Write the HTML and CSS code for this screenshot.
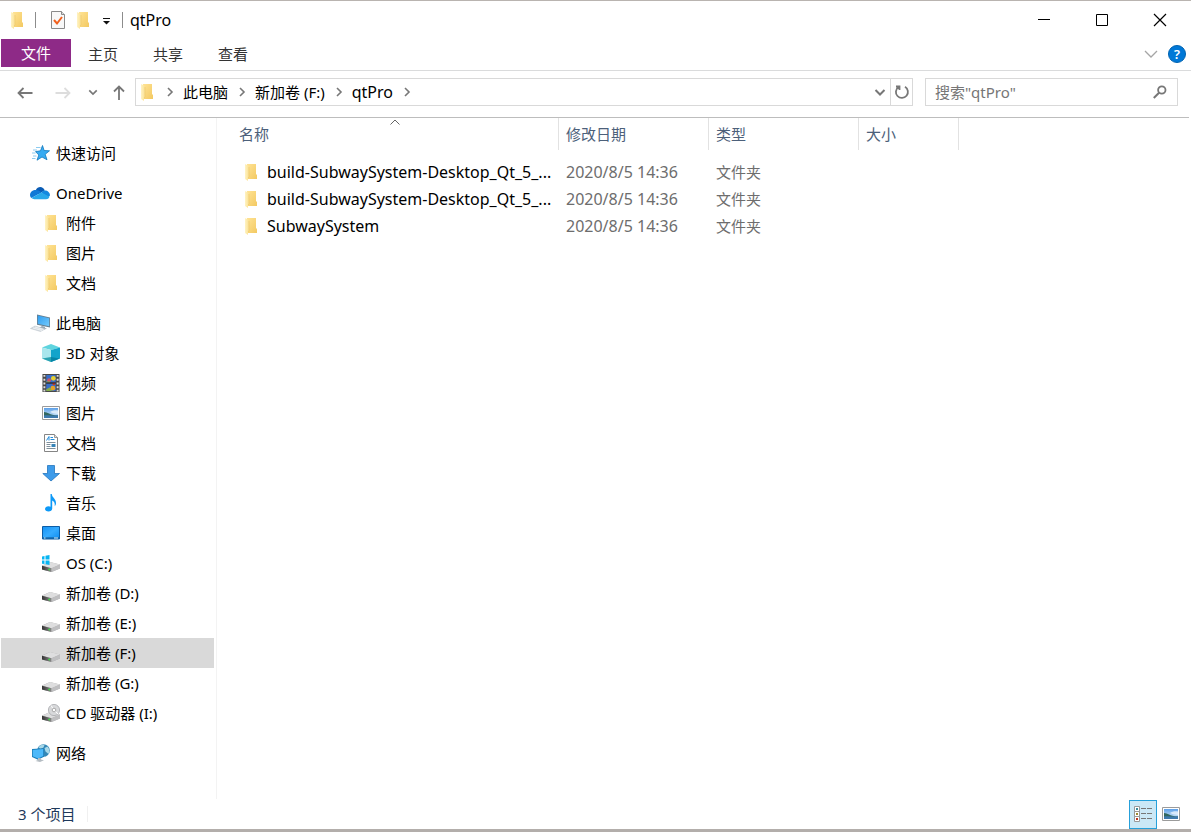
FILE: index.html
```html
<!DOCTYPE html>
<html lang="zh-CN">
<head>
<meta charset="utf-8">
<meta name="viewport" content="width=device-width, initial-scale=1">
<title>qtPro</title>
<link rel="stylesheet" href="styles.css">
</head>
<body>
<svg class="sprite" aria-hidden="true">
  <defs>
    <linearGradient id="g-folder" x1="0" y1="0" x2="1" y2="1"><stop offset="0" stop-color="#ffe394"/><stop offset="1" stop-color="#f3c962"/></linearGradient>
    <linearGradient id="g-flap" x1="0" y1="0" x2="1" y2="0"><stop offset="0" stop-color="#fff3c4"/><stop offset="1" stop-color="#fbe08f"/></linearGradient>
    <linearGradient id="g-blue" x1="0" y1="0" x2="1" y2="1"><stop offset="0" stop-color="#2f9df0"/><stop offset="1" stop-color="#74cafb"/></linearGradient>
    <linearGradient id="g-desk" x1="0" y1="0" x2="1" y2="1"><stop offset="0" stop-color="#1492f5"/><stop offset="0.5" stop-color="#35abff"/><stop offset="1" stop-color="#0d8cf0"/></linearGradient>
    <linearGradient id="g-front" x1="0" y1="0" x2="1" y2="0"><stop offset="0" stop-color="#333"/><stop offset="1" stop-color="#8a8a8a"/></linearGradient>
    <linearGradient id="g-sky" x1="0" y1="0" x2="0" y2="1"><stop offset="0" stop-color="#5b9fe8"/><stop offset="1" stop-color="#e3f2fb"/></linearGradient>
  </defs>
  <symbol id="i-folder" viewBox="0 0 18 18">
    <path d="M5 1h9v10l1 1v4H5z" fill="url(#g-folder)"/>
    <path d="M3 1l4 2v11l-1 1v3l-3-2z" fill="url(#g-flap)"/>
    <path d="M6 15l1-1V4" fill="none" stroke="#e9c66b" stroke-width=".6"/>
  </symbol>
  <symbol id="i-star" viewBox="0 0 18 18">
    <path d="M10.500 1.500l1.600 5L17.500 6.800l-4.300 3.500L15 15.800 10 13 5 16.200 6.800 11 3.500 7.600l5-.8z" fill="#37abf2" stroke="#1278bd" stroke-width=".8"/>
    <path d="M4 3.500H8.500M1 6h4M0 9h3.500M1 12h3.500M0 14.500h3.500" stroke="#8ccbf0" stroke-width="1"/>
  </symbol>
  <symbol id="i-cloud" viewBox="0 0 21 14">
    <path d="M6 4C8-.5 14-.5 15.500 4.500L9 8z" fill="#0a5cb5"/>
    <path d="M6 3.800c-3 0-6 2-6 5.200 0 1.500.6 2.500 1.500 3.300L12 6.500C10 4.500 8 3.800 6 3.800z" fill="#1079d6"/>
    <path d="M15.500 4.300c-1.500 0-2.500.6-3.500 2.200l6.500 5.500L21 9.500c0-3-2.300-5.200-5.500-5.200z" fill="#1489df"/>
    <path d="M1.500 12.300L12 6.500l8.500 4.400c-.6 1.800-2 2.600-3.700 2.600H4.500c-1.200 0-2.200-.5-3-1.200z" fill="#28a8ea"/>
  </symbol>
  <symbol id="i-pc" viewBox="0 0 20 18">
    <path d="M7 .5l13 3v10l-13-2.800z" fill="#657f91"/><path d="M7.800 1.500l11.400 2.700v8L7.800 9.700z" fill="url(#g-blue)"/>
    <path d="M12 12l3 .8v1.200l2 .8-3 .7-5-1.500z" fill="#9aa8b3"/><path d="M5 12l10 3-4.500 2.500L.5 14.500z" fill="#d5dce1" stroke="#b5bfc7" stroke-width=".5"/>
    <path d="M3 14l9 2.400M5 13l8.500 2.400" stroke="#fff" stroke-width=".6"/>
  </symbol>
  <symbol id="i-cube" viewBox="0 0 18 18">
    <path d="M9 0l9 3.500L9 6 0 3.500z" fill="#5fd4de"/><path d="M0 3.500L9 6v12l-9-3.500z" fill="#a9e6ed"/><path d="M18 3.500L9 6v12l9-3.500z" fill="#13a4cb"/><path d="M9 13v5l-9-3.500z" fill="#2aa3b2"/><path d="M9 13l9 1.500L9 18z" fill="#0786a8"/>
  </symbol>
  <symbol id="i-film" viewBox="0 0 18 19">
    <path d="M0 0h18v19H0z" fill="#484848"/><path d="M4 1h10v8H4zM4 10h10v8H4z" fill="#386ec9"/>
    <path d="M1 1h2v2H1zM1 5h2v2H1zM1 9h2v2H1zM1 13h2v2H1zM1 16.500h2v2H1zM15 1h2v2h-2zM15 5h2v2h-2zM15 9h2v2h-2zM15 13h2v2h-2zM15 16.500h2v2h-2z" fill="#ddd"/>
    <circle cx="11.500" cy="4.500" r="2.500" fill="#e7cf31"/><circle cx="12" cy="10.500" r="1.500" fill="#c63a2c"/><circle cx="7" cy="6.500" r="2" fill="#cf5363"/><circle cx="11" cy="15" r="2.500" fill="#e5a127"/><path d="M4 8h4v1H4zM4 16l4-2 2 4H4z" fill="#87ae49"/><path d="M4 9.500h10" stroke="#222"/>
  </symbol>
  <symbol id="i-photo" viewBox="0 0 18 14">
    <path d="M.5.500h17v13H.5z" fill="#fff" stroke="#9b9b9b"/><path d="M2 2h14v10H2z" fill="url(#g-sky)"/><path d="M2 6c4 0 5 3 14 3.500v1H2z" fill="#326860"/><path d="M2 9.500c5-1 9 1 14-.5v3H2z" fill="#3d79ad"/><path d="M8 6c2-1.500 5-2 8-1.500V8l-5-.8z" fill="#fff" opacity=".65"/>
  </symbol>
  <symbol id="i-doc" viewBox="0 0 18 18">
    <path d="M2.500.500h10l3 3v14h-13z" fill="#fff" stroke="#858585"/><path d="M12.500.500v3h3" fill="#ddd" stroke="#858585" stroke-width=".8"/>
    <path d="M4.500 6.500L7 2.500v4M8.500 3.500h2.500M8.500 5.500h4" fill="none" stroke="#218ddd"/><path d="M4.500 8.500h9M4.500 10.500h4M4.500 12.500h4M4.500 14.500h9" stroke="#7f8f9b"/><path d="M9.500 10h4v3h-4z" fill="#3583b7"/>
  </symbol>
  <symbol id="i-down" viewBox="0 0 18 18"><path d="M5.500 1.500h7v8h5L9 17 .8 9.500h4.700z" fill="#3d9bea" stroke="#2375bc" stroke-width=".8"/></symbol>
  <symbol id="i-note" viewBox="0 0 18 18"><path d="M8.500 0h1.300c.3 4 4.500 4.500 4.200 9.500-.1 1-.5 2-1.300 2.700.4-3.400-.7-4.700-2.500-5.700v8c0 1.800-1.700 3-3.700 3S3 16.500 3 15s1.500-2.700 3.500-2.700c.8 0 1.500.2 2 .4z" fill="#0d99f7"/></symbol>
  <symbol id="i-desk" viewBox="0 0 18 14"><path d="M.5.500h17v12.500H.5z" fill="url(#g-desk)" stroke="#0c5da6"/><path d="M1 12h16" stroke="#0b4d86"/><path d="M2 12h1.500M12 12h4" stroke="#d4f2ff"/></symbol>
  <symbol id="i-drive" viewBox="0 0 18 18"><path d="M0 11.500L8 8l10 2.500v4L9.500 18 0 15.500z" fill="#aaa"/><path d="M0 11.800L8 8l10 2.500-8.500 3.700z" fill="#dededf"/><path d="M0 11.800l9.500 2.400V18L0 15.500z" fill="url(#g-front)"/><path d="M9.500 14.200L18 10.500v4L9.500 18z" fill="#bfbfc1"/><path d="M6.500 15.300l1.500.4" stroke="#38e445" stroke-width="1.500"/></symbol>
  <symbol id="i-os" viewBox="0 0 18 18"><use href="#i-drive" width="18" height="18"/><path d="M-1 2.600l3.500-.6v3.500H-1zM3.500 1.800L7.500 1v4.500h-4zM-1 6.500h3.500V10L-1 9.500zM3.500 6.500h4V11l-4-.8z" fill="#08b5f2"/></symbol>
  <symbol id="i-cd" viewBox="0 0 18 18"><use href="#i-drive" width="18" height="18"/><circle cx="12" cy="6" r="5.600" fill="#d8d9db" stroke="#a8aaad" stroke-width=".8"/><path d="M12 6L9 1.500M12 6l4 4" stroke="#fff"/><circle cx="12" cy="6" r="1.800" fill="#fff" stroke="#999" stroke-width=".8"/></symbol>
  <symbol id="i-net" viewBox="0 0 18 18">
    <circle cx="11.500" cy="6.500" r="6.300" fill="#3487b6"/>
    <path d="M6.500 3.500c1.500-2.500 4-3 6-2.500l-1 2.500L8.500 5zM12.500 4l3-1.500c2 2 2.500 5 1 7.500l-3-2.500z" fill="#a8d8e8"/>
    <path d="M0 5l12-.8v8.600l-6 3L0 13z" fill="#1d7fba"/><path d="M.8 5.900l10.400-.8v7l-5 2.400-5.400-2.200z" fill="#4db9fa"/>
    <path d="M6 14l3 .2v1.300l3 .8L8 18l-4.500-1 2.500-1z" fill="#b4bcc2"/>
  </symbol>
  <symbol id="i-chev" viewBox="0 0 10 10"><path d="M3 1l4 4-4 4" fill="none" stroke="#777" stroke-width="1.600"/></symbol>
  <symbol id="i-chevdown" viewBox="0 0 12 12"><path d="M1.500 4L6 8.500 10.500 4" fill="none" stroke="currentColor" stroke-width="2"/></symbol>
</svg>

<div class="window">
  <header class="titlebar">
    <svg class="icon"><use href="#i-folder"/></svg>
    <span class="bar bar-a"></span>
    <button class="quick" aria-label="属性"><svg class="icon" viewBox="0 0 18 18"><path d="M2.500.500h10l3 3v14h-13z" fill="#f8f8f8" stroke="#8a8a8a"/><path d="M12.500.500v3h3" fill="#ddd" stroke="#8a8a8a"/><path d="M5 9l3 3.500L13 6" fill="none" stroke="#f1601d" stroke-width="2"/></svg></button>
    <button class="quick" aria-label="新建文件夹"><svg class="icon"><use href="#i-folder"/></svg></button>
    <button class="quick quick-more" aria-label="自定义快速访问工具栏"><svg width="8" height="8" viewBox="0 0 8 8"><path d="M0 .500h7" stroke="#111"/><path d="M0 3h7L3.500 6.500z" fill="#111"/></svg></button>
    <span class="bar bar-b"></span>
    <h1 class="title">qtPro</h1>
    <div class="controls">
      <button aria-label="最小化"><svg width="12" height="12" viewBox="0 0 12 12"><path d="M0 5.500h12" stroke="#000"/></svg></button>
      <button aria-label="最大化"><svg width="12" height="12" viewBox="0 0 12 12"><path d="M.5.500h11v11H.5z" fill="none" stroke="#000"/></svg></button>
      <button aria-label="关闭"><svg width="12" height="12" viewBox="0 0 12 12"><path d="M0 0l12 12M12 0L0 12" stroke="#000" stroke-width="1.200"/></svg></button>
    </div>
  </header>

  <nav class="tabs">
    <button class="tab file">文件</button>
    <button class="tab">主页</button>
    <button class="tab">共享</button>
    <button class="tab">查看</button>
    <div class="tabs-end">
      <button aria-label="展开功能区"><svg width="14" height="14" viewBox="0 0 14 14"><path d="M1 4l6 6 6-6" fill="none" stroke="#a5a5a5" stroke-width="1.300"/></svg></button>
      <button class="help" aria-label="帮助">?</button>
    </div>
  </nav>

  <div class="navrow">
    <button class="nav-btn" aria-label="后退"><svg width="16" height="14" viewBox="0 0 16 14"><path d="M15.500 8H1.500M6.500 3L1.500 8l5 5" fill="none" stroke="#777" stroke-width="1.800"/></svg></button>
    <button class="nav-btn" aria-label="前进"><svg width="16" height="14" viewBox="0 0 16 14"><path d="M.5 8h14M9.500 3l5 5-5 5" fill="none" stroke="#ddd" stroke-width="1.800"/></svg></button>
    <button class="nav-btn recent" aria-label="最近浏览的位置"><svg width="10" height="10"><use href="#i-chevdown"/></svg></button>
    <button class="nav-btn up" aria-label="上移"><svg width="14" height="16" viewBox="0 0 14 16"><path d="M7 16V2.500M2 7.500l5-5 5 5" fill="none" stroke="#777" stroke-width="1.800"/></svg></button>
    <div class="address">
      <svg class="icon"><use href="#i-folder"/></svg>
      <svg class="chev"><use href="#i-chev"/></svg>
      <button>此电脑</button>
      <svg class="chev"><use href="#i-chev"/></svg>
      <button>新加卷 (F:)</button>
      <svg class="chev"><use href="#i-chev"/></svg>
      <button class="latin">qtPro</button>
      <svg class="chev"><use href="#i-chev"/></svg>
      <button class="history" aria-label="以前的位置"><svg width="12" height="12"><use href="#i-chevdown"/></svg></button>
      <button class="refresh" aria-label="刷新"><svg width="16" height="16" viewBox="0 0 16 16"><path d="M11 2.800A6 6 0 1 1 4.500 3M2 2.500h3.500V6" fill="none" stroke="#777" stroke-width="1.800"/></svg></button>
    </div>
    <label class="search">
      <input type="text" aria-label="搜索" placeholder='搜索"qtPro"'>
      <svg width="14" height="14" viewBox="0 0 14 14"><circle cx="8.800" cy="5" r="3.700" fill="none" stroke="#777" stroke-width="1.800"/><path d="M6 7.800L.8 13" stroke="#777" stroke-width="2"/></svg>
    </label>
  </div>

  <div class="content">
    <aside class="sidebar">
      <ul>
        <li><a href="#"><svg class="icon"><use href="#i-star"/></svg>快速访问</a></li>
      </ul>
      <ul>
        <li><a href="#"><svg class="icon wide"><use href="#i-cloud"/></svg>OneDrive</a></li>
        <li><a href="#" class="sub"><svg class="icon"><use href="#i-folder"/></svg>附件</a></li>
        <li><a href="#" class="sub"><svg class="icon"><use href="#i-folder"/></svg>图片</a></li>
        <li><a href="#" class="sub"><svg class="icon"><use href="#i-folder"/></svg>文档</a></li>
      </ul>
      <ul>
        <li><a href="#"><svg class="icon wide"><use href="#i-pc"/></svg>此电脑</a></li>
        <li><a href="#" class="sub"><svg class="icon"><use href="#i-cube"/></svg>3D 对象</a></li>
        <li><a href="#" class="sub"><svg class="icon"><use href="#i-film"/></svg>视频</a></li>
        <li><a href="#" class="sub"><svg class="icon"><use href="#i-photo"/></svg>图片</a></li>
        <li><a href="#" class="sub"><svg class="icon"><use href="#i-doc"/></svg>文档</a></li>
        <li><a href="#" class="sub"><svg class="icon"><use href="#i-down"/></svg>下载</a></li>
        <li><a href="#" class="sub"><svg class="icon"><use href="#i-note"/></svg>音乐</a></li>
        <li><a href="#" class="sub"><svg class="icon"><use href="#i-desk"/></svg>桌面</a></li>
        <li><a href="#" class="sub"><svg class="icon"><use href="#i-os"/></svg>OS (C:)</a></li>
        <li><a href="#" class="sub"><svg class="icon"><use href="#i-drive"/></svg>新加卷 (D:)</a></li>
        <li><a href="#" class="sub"><svg class="icon"><use href="#i-drive"/></svg>新加卷 (E:)</a></li>
        <li><a href="#" class="sub selected" aria-current="page"><svg class="icon"><use href="#i-drive"/></svg>新加卷 (F:)</a></li>
        <li><a href="#" class="sub"><svg class="icon"><use href="#i-drive"/></svg>新加卷 (G:)</a></li>
        <li><a href="#" class="sub"><svg class="icon"><use href="#i-cd"/></svg>CD 驱动器 (I:)</a></li>
      </ul>
      <ul>
        <li><a href="#"><svg class="icon"><use href="#i-net"/></svg>网络</a></li>
      </ul>
    </aside>
    <main class="files">
      <table>
        <colgroup><col class="c-name"><col class="c-date"><col class="c-date"><col class="c-size"><col></colgroup>
        <thead>
          <tr>
            <th scope="col">名称<svg class="sort" width="10" height="6" viewBox="0 0 10 6"><path d="M.5 5.500L5 1l4.500 4.500" fill="none" stroke="#666"/></svg></th>
            <th scope="col">修改日期</th><th scope="col">类型</th><th scope="col">大小</th><td></td>
          </tr>
        </thead>
        <tbody>
          <tr><td><span class="name latin"><svg class="icon"><use href="#i-folder"/></svg>build-SubwaySystem-Desktop_Qt_5_...</span></td><td class="latin">2020/8/5 14:36</td><td>文件夹</td><td></td><td></td></tr>
          <tr><td><span class="name latin"><svg class="icon"><use href="#i-folder"/></svg>build-SubwaySystem-Desktop_Qt_5_...</span></td><td class="latin">2020/8/5 14:36</td><td>文件夹</td><td></td><td></td></tr>
          <tr><td><span class="name latin"><svg class="icon"><use href="#i-folder"/></svg>SubwaySystem</span></td><td class="latin">2020/8/5 14:36</td><td>文件夹</td><td></td><td></td></tr>
        </tbody>
      </table>
    </main>
  </div>

  <footer class="status">
    <span class="count">3 个项目</span>
    <button class="view active" aria-label="详细信息"><svg width="18" height="18" viewBox="0 0 18 18"><path d="M.5 1.500h5v5h-5zM.5 6.500h5v5h-5zM.5 11.500h5v5h-5z" fill="#fff" stroke="#999"/><path d="M2 3h2v2H2z" fill="#3a8a9a"/><path d="M2 8h2v2H2z" fill="#a08a30"/><path d="M2 13h2v2H2z" fill="#c0341f"/><path d="M7 3.500h5M13 3.500h5M7 8.500h5M13 8.500h5M7 13.500h5M13 13.500h5" stroke="#777"/></svg></button>
    <button class="view" aria-label="大图标"><svg width="18" height="14"><use href="#i-photo"/></svg></button>
  </footer>
</div>
</body>
</html>
```
FILE: styles.css
```css
* { box-sizing: border-box; }

body {
  margin: 0;
  background: #fff;
  color: #000;
  font: 15px/20px "Noto Sans", "Noto Sans CJK SC", sans-serif;
}

button {
  display: flex;
  align-items: center;
  justify-content: center;
  margin: 0;
  padding: 0;
  border: 0;
  background: none;
  color: inherit;
  font: inherit;
}

svg { display: block; flex: none; overflow: visible; }
ul { margin: 0 0 10px; padding: 0; list-style: none; }
.sprite { position: absolute; width: 0; height: 0; }
.icon { width: 18px; height: 18px; }
.latin { font-size: 16px; }

.window {
  display: flex;
  flex-direction: column;
  min-height: 100vh;
  border-top: 1px solid #b9b4b0;
  border-bottom: 3px solid #b3aeab;
}

.titlebar {
  display: flex;
  align-items: center;
  height: 38px;
  padding: 0 2px 0 8px;
}
.bar { width: 1px; height: 16px; background: #8c8c8c; }
.bar-a { margin: 0 13px 0 9px; }
.bar-b { margin-right: 7px; }
.quick { margin-right: 7px; }
.quick-more { width: 16px; padding-top: 4px; }
.title { margin: 0; font-size: 16px; font-weight: 400; }
.controls { display: flex; align-self: stretch; margin-left: auto; }
.controls button { width: 58px; }

.tabs {
  display: flex;
  align-items: flex-start;
  height: 32px;
  padding-left: 1px;
  border-bottom: 1px solid #dadbdc;
  color: #333;
}
.tab { width: 64px; height: 30px; margin-right: 1px; }
.tab.file {
  width: 70px;
  height: 28px;
  margin-right: 0;
  background: #8e2a87;
  color: #fff;
}
.tabs-end { display: flex; align-items: center; gap: 10px; height: 30px; margin-left: auto; padding-right: 5px; }
.help {
  width: 18px;
  height: 18px;
  border: 1px solid #0063b1;
  border-radius: 50%;
  background: #0078d7;
  color: #fff;
  font-weight: 600;
  font-size: 13px;
}

.navrow {
  display: flex;
  height: 46px;
  padding: 7px 13px 11px 6px;
}
.nav-btn { width: 38px; color: #777; }
.nav-btn.recent { width: 22px; }
.nav-btn.up { width: 31px; padding-right: 2px; }
.address {
  display: flex;
  flex: 1;
  align-items: center;
  min-width: 0;
  margin-right: 12px;
  padding-left: 2px;
  border: 1px solid #d9d9d9;
}
.address button { align-self: stretch; padding-bottom: 1px; white-space: nowrap; }
.chev { width: 10px; height: 10px; margin: 0 8px 0 9px; }
.address .history { width: 20px; margin-left: auto; color: #777; }
.address .refresh { width: 22px; border-left: 1px solid #d9d9d9; }
.search {
  display: flex;
  align-items: center;
  width: 253px;
  padding: 0 10px 0 9px;
  border: 1px solid #d9d9d9;
}
.search input {
  flex: 1;
  min-width: 0;
  padding: 0;
  border: 0;
  outline: 0;
  font: inherit;
}
.search input::placeholder { color: #767676; opacity: 1; }

.content {
  display: flex;
  flex: 1;
  margin: 0 2px 0 0;
  border-top: 1px solid #bdbdbd;
}
.sidebar {
  width: 217px;
  padding: 20px 2px 0 1px;
  border-right: 1px solid #f3f3f3;
}
.sidebar a {
  display: flex;
  align-items: center;
  gap: 6px;
  height: 30px;
  padding-left: 31px;
  color: #000;
  text-decoration: none;
  white-space: nowrap;
}
.sidebar .wide { width: 20px; margin-left: -2px; }
.sidebar .sub { padding-left: 41px; }
.sidebar .selected { background: #d9d9d9; }

.files { flex: 1; min-width: 0; padding-left: 15px; }
table { width: 100%; table-layout: fixed; border-collapse: separate; border-spacing: 0; }
.c-name { width: 327px; }
.c-date { width: 150px; }
.c-size { width: 100px; }
th, td {
  height: 27px;
  padding: 0 0 0 7px;
  color: #6d6d6d;
  text-align: left;
  white-space: nowrap;
}
th {
  position: relative;
  height: 32px;
  border-right: 1px solid #e2e2e2;
  color: #4c607a;
  font-weight: 400;
}
tbody::before { content: ""; display: block; height: 8px; }
.sort { position: absolute; top: 1px; left: 50%; margin-left: -5px; }
.name { display: flex; align-items: center; gap: 7px; padding-left: 3px; color: #000; }

.status {
  display: flex;
  align-items: center;
  height: 30px;
  padding: 0 6px 0 18px;
  color: #1e395b;
}
.count { margin-right: auto; padding-right: 12px; line-height: 16px; border-right: 1px solid #f0f0f0; }
.view { width: 28px; height: 29px; border: 1px solid transparent; }
.view.active { border-color: #26a0da; background: #cbe8f6; }
```
